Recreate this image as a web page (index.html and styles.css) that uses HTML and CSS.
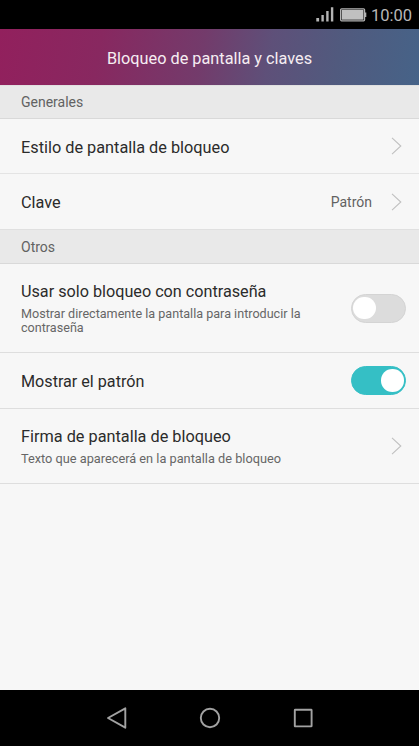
FILE: index.html
```html
<!DOCTYPE html>
<html lang="es">
<head>
<meta charset="utf-8">
<title>Bloqueo de pantalla y claves</title>
<link rel="stylesheet" href="styles.css">
</head>
<body>
<div class="status">
  <svg class="signal" width="18" height="15" viewBox="0 0 18 15"><path d="M.3 11h2.8v3.5H.3zM5.4 8h2.4v6.5H5.4zM10.2 4h2.4v10.5h-2.4zM14.9 .3h2.4v14.2h-2.4z" fill="#b4b4b4"/></svg>
  <svg class="battery" width="27" height="14" viewBox="0 0 27 14"><rect x=".6" y=".8" width="24" height="12" rx="1" fill="none" stroke="#b4b4b4" stroke-width="1.2"/><rect x="1.7" y="1.9" width="21.8" height="9.8" fill="#c0c0c0"/><path d="M25 4.5h1.3v4.6H25z" fill="#b4b4b4"/></svg>
  <span class="time">10:00</span>
</div>
<header class="header"><h1>Bloqueo de pantalla y claves</h1></header>
<main class="content">
  <h2 class="section">Generales</h2>
  <div class="row first">
    <div class="title">Estilo de pantalla de bloqueo</div>
    <svg class="chevron" width="11" height="18" viewBox="0 0 11 18"><path d="M1 .8l8.8 8.2L1 17.2"/></svg>
  </div>
  <div class="row clave">
    <div class="title">Clave</div>
    <span class="value">Patrón</span>
    <svg class="chevron" width="11" height="18" viewBox="0 0 11 18"><path d="M1 .8l8.8 8.2L1 17.2"/></svg>
  </div>
  <h2 class="section others">Otros</h2>
  <div class="row password">
    <div class="text"><div class="title">Usar solo bloqueo con contraseña</div><p>Mostrar directamente la pantalla para introducir la contraseña</p></div>
    <span class="switch"></span>
  </div>
  <div class="row pattern">
    <div class="title">Mostrar el patrón</div>
    <span class="switch on"></span>
  </div>
  <div class="row signature">
    <div class="text"><div class="title">Firma de pantalla de bloqueo</div><p>Texto que aparecerá en la pantalla de bloqueo</p></div>
    <svg class="chevron" width="11" height="18" viewBox="0 0 11 18"><path d="M1 .8l8.8 8.2L1 17.2"/></svg>
  </div>
</main>
<nav class="nav">
  <svg width="22" height="24" viewBox="0 0 22 24"><path d="M19.3 2.3v19.4L2 12z"/></svg>
  <svg width="22" height="24" viewBox="0 0 22 24"><circle cx="11" cy="12" r="9.2"/></svg>
  <svg width="22" height="24" viewBox="0 0 22 24"><rect x="2.8" y="3.8" width="16.8" height="16.6" rx=".5"/></svg>
</nav>
</body>
</html>
```
FILE: styles.css
```css
* { box-sizing: border-box; }
body { margin: 0; height: 746px; display: flex; flex-direction: column; overflow: hidden; background: #f7f7f7; font-family: Roboto, "Liberation Sans", sans-serif; color: #2b2b2b; }
h1, h2, p { margin: 0; font-weight: 400; }
.status { height: 29px; background: #000; display: flex; justify-content: flex-end; align-items: center; padding: 0 7px 0 0; }
.signal { margin-right: 6px; }
.battery { margin-right: 4px; margin-top: 1px; }
.time { color: #b8b8b8; font-size: 16.5px; line-height: 20px; padding-top: 3px; }
.header { height: 56px; display: flex; align-items: center; justify-content: center; padding-top: 4px; background: linear-gradient(100deg, #92205d 0%, #882860 24%, #733b6b 48%, #5e5079 64%, #515a7e 80%, #466388 100%); }
h1 { color: #f6edf2; font-size: 16.3px; line-height: 20px; white-space: nowrap; }
.content { flex: 1; }
.section { height: 34px; padding: 0 21px; display: flex; align-items: center; background: #e9e9e9; border-top: 1px solid #e0e0e0; border-bottom: 1px solid #d9d9d9; font-size: 14px; color: #626262; }
.others { height: 35px; }
.row { display: flex; align-items: center; justify-content: space-between; padding: 0 17px 0 21px; border-bottom: 1px solid #dedede; }
.first { height: 55px; border-bottom: 1px solid #e4e4e4; }
.clave .title, .pattern .title { padding-top: 2px; }
.first .title { padding-top: 3px; }
.clave { height: 55px; border-bottom: 0; }
.password { height: 89px; padding-right: 13px; }
.pattern { height: 56px; padding-right: 13px; }
.signature { height: 75px; }
.title { font-size: 16.3px; line-height: 20px; white-space: nowrap; }
.password .title { font-size: 16.2px; }
.pattern .title { font-size: 16.15px; }
.text { padding-top: 1px; }
.text p { width: 290px; margin-top: 5px; font-size: 12.6px; line-height: 14.5px; color: #666; }
.signature p { font-size: 12.75px; }
.value { margin-left: auto; margin-right: 19px; font-size: 14px; color: #626262; }
.chevron { flex: none; fill: none; stroke: #c0c0c0; stroke-width: 1.1; }
.switch { flex: none; width: 55px; height: 29px; padding: 0 1.5px; border: 1px solid #d4d4d4; border-radius: 15px; background: #dcdcdc; display: flex; align-items: center; }
.switch::before { content: ""; width: 22.5px; height: 22.5px; border-radius: 50%; background: #fff; }
.password .switch { padding-left: 1px; }
.on { justify-content: flex-end; background: #35bfc5; border-color: #35bfc5; }
.nav { height: 56px; background: #000; display: flex; justify-content: center; align-items: center; gap: 71px; }
.nav svg { fill: none; stroke: #a2a2a2; stroke-width: 1.9; stroke-linejoin: round; }
```
